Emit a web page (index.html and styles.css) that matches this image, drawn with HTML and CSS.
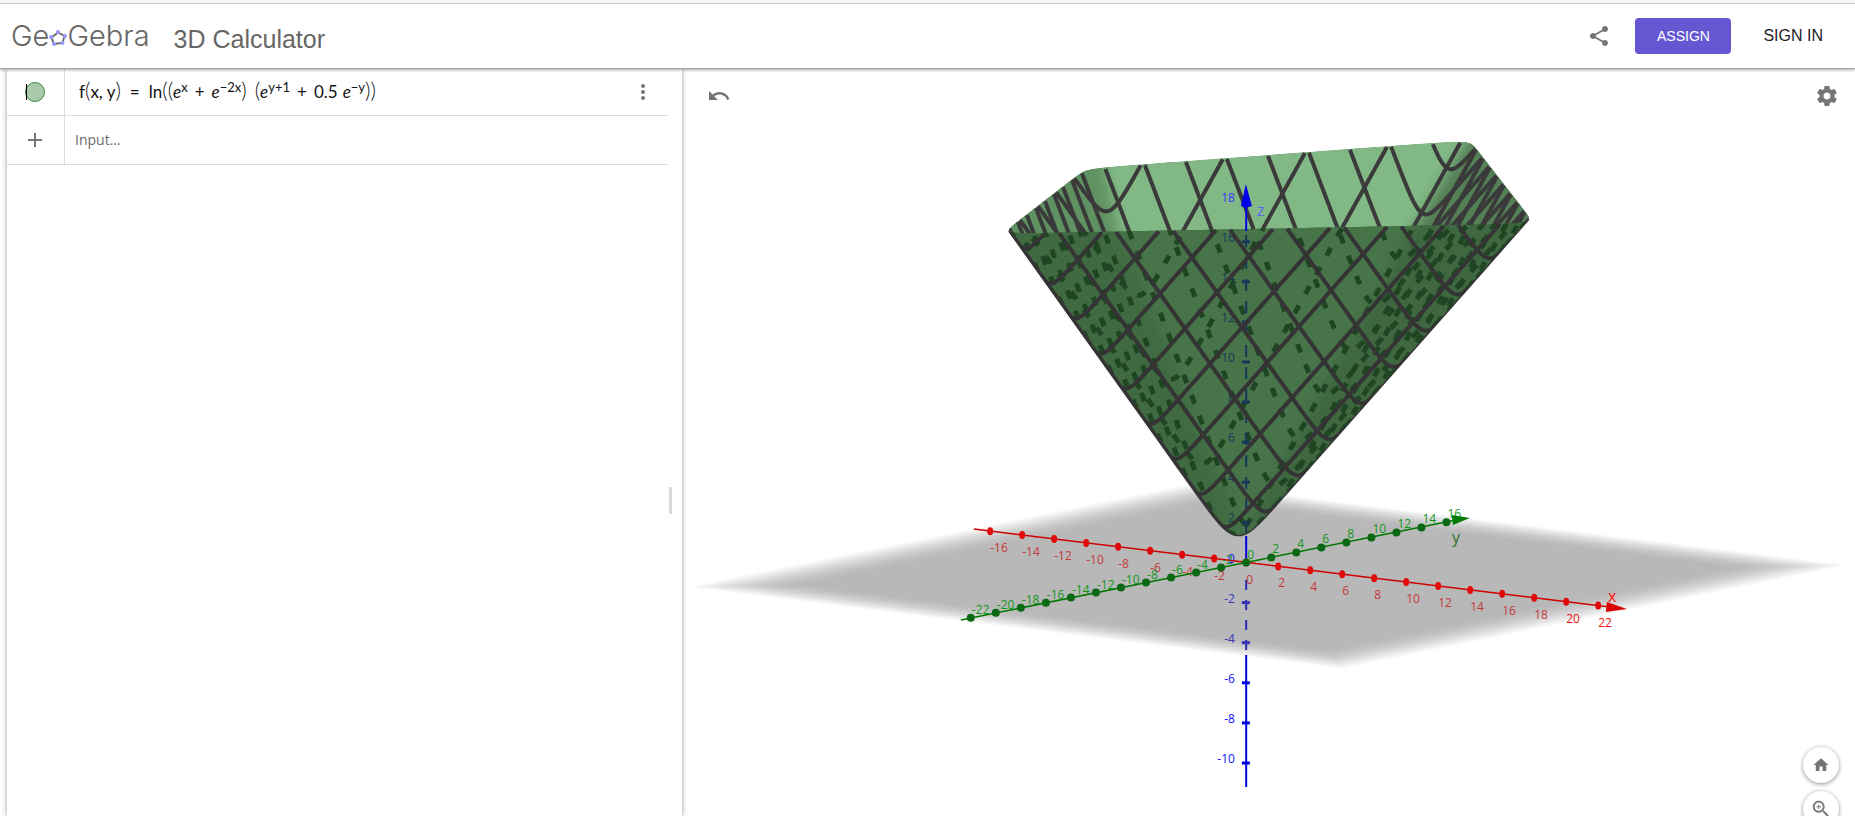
FILE: index.html
```html
<!DOCTYPE html>
<html lang="en">
<head>
<meta charset="utf-8">
<title>3D Calculator - GeoGebra</title>
<link rel="stylesheet" href="styles.css">
</head>
<body>
<header class="header">
  <a class="logo" href="#" aria-label="GeoGebra">
    <span>Ge</span>
    <svg class="logo-o" viewBox="0 0 18 18" aria-hidden="true">
      <path d="M9 3.500 15.500 7 13.500 14 5 15 2.500 8.500Z" fill="none" stroke="#666" stroke-width="1.800"/>
      <g fill="#9999ff"><circle cx="9" cy="3" r="2"/><circle cx="16" cy="7" r="2"/><circle cx="13.500" cy="14" r="2"/><circle cx="5" cy="15" r="2"/><circle cx="2" cy="8" r="2"/></g>
    </svg>
    <span>Gebra</span>
  </a>
  <h1 class="title">3D Calculator</h1>
  <div class="actions">
    <button class="icon-button" aria-label="Share">
      <svg viewBox="0 0 24 24"><path d="M18 16.080c-.76 0-1.440.3-1.960.77L8.910 12.700c.05-.23.09-.46.09-.7s-.04-.47-.09-.7l7.050-4.110c.54.5 1.250.81 2.040.81 1.660 0 3-1.340 3-3s-1.340-3-3-3-3 1.340-3 3c0 .24.04.47.09.7L8.040 9.810C7.500 9.310 6.790 9 6 9c-1.660 0-3 1.340-3 3s1.340 3 3 3c.79 0 1.500-.31 2.040-.81l7.120 4.160c-.05.21-.08.43-.08.65 0 1.610 1.310 2.920 2.920 2.920s2.920-1.310 2.920-2.920-1.310-2.920-2.920-2.920z"/></svg>
    </button>
    <button class="assign">ASSIGN</button>
    <button class="sign-in">SIGN IN</button>
  </div>
</header>
<main class="workspace">
  <section class="algebra" aria-label="Algebra view">
    <div class="row">
      <div class="row-head"><button class="marble" aria-label="Show or hide f"></button></div>
      <div class="formula">
        <span>f<span class="tall">(</span>x, y<span class="tall">)</span></span><span class="wide">=</span><span>ln<span class="tall">((</span><i>e</i><sup>x</sup></span><span class="op">+</span><span><i>e</i><sup>−2x</sup><span class="tall">)</span></span><span class="group"><span class="tall">(</span><i>e</i><sup>y+1</sup></span><span class="op">+</span><span>0.5</span><span class="factor"><i>e</i><sup>−y</sup><span class="tall">))</span></span>
      </div>
      <button class="icon-button more" aria-label="More">
        <svg viewBox="0 0 24 24"><circle cx="12" cy="6" r="2"/><circle cx="12" cy="12" r="2"/><circle cx="12" cy="18" r="2"/></svg>
      </button>
    </div>
    <div class="row">
      <div class="row-head">
        <button class="icon-button" aria-label="Add"><svg viewBox="0 0 24 24"><path d="M11 5h2v6h6v2h-6v6h-2v-6H5v-2h6z"/></svg></button>
      </div>
      <input class="entry" type="text" placeholder="Input..." aria-label="Input">
    </div>
    <div class="handle"></div>
  </section>
  <section class="graphics" aria-label="3D graphics view">
    <svg id="scene" class="scene" viewBox="682 69 1173 747" preserveAspectRatio="xMidYMid slice"></svg>
    <div class="toolbar">
      <button class="icon-button" aria-label="Undo"><svg viewBox="0 0 24 24"><path d="M12.500 8c-2.650 0-5.050.99-6.900 2.600L2 7v9h9l-3.620-3.620c1.390-1.160 3.160-1.880 5.120-1.880 3.540 0 6.550 2.310 7.600 5.500l2.370-.78C21.080 11.030 17.150 8 12.500 8z"/></svg></button>
      <button class="icon-button" aria-label="Settings"><svg viewBox="0 0 24 24"><path d="M19.430 12.980c.04-.32.07-.64.07-.98s-.03-.66-.07-.98l2.110-1.650c.19-.15.24-.42.12-.64l-2-3.460c-.12-.22-.39-.3-.61-.22l-2.490 1c-.52-.4-1.080-.73-1.690-.98l-.38-2.650C14.460 2.180 14.250 2 14 2h-4c-.25 0-.46.18-.49.42l-.38 2.650c-.61.25-1.170.59-1.690.98l-2.490-1c-.23-.09-.49 0-.61.22l-2 3.460c-.13.22-.07.49.12.64l2.110 1.650c-.04.32-.07.65-.07.98s.03.66.07.98l-2.110 1.650c-.19.15-.24.42-.12.64l2 3.460c.12.22.39.3.61.22l2.490-1c.52.4 1.080.73 1.690.98l.38 2.650c.03.24.24.42.49.42h4c.25 0 .46-.18.49-.42l.38-2.650c.61-.25 1.170-.59 1.690-.98l2.490 1c.23.09.49 0 .61-.22l2-3.460c.12-.22.07-.49-.12-.64l-2.110-1.650zM12 15.500c-1.930 0-3.500-1.570-3.500-3.500s1.570-3.500 3.500-3.500 3.500 1.570 3.500 3.500-1.570 3.500-3.500 3.500z"/></svg></button>
    </div>
    <div class="zoom-panel">
      <button class="round" aria-label="Standard view"><svg viewBox="0 0 24 24"><path d="M10 20v-6h4v6h5v-8h3L12 3 2 12h3v8z"/></svg></button>
      <button class="round" aria-label="Zoom in"><svg viewBox="0 0 24 24"><path d="M15.500 14h-.79l-.28-.27C15.410 12.590 16 11.110 16 9.500 16 5.910 13.090 3 9.500 3S3 5.910 3 9.500 5.910 16 9.500 16c1.610 0 3.090-.59 4.230-1.570l.27.28v.79l5 4.990L20.490 19l-4.990-5zm-6 0C7.010 14 5 11.990 5 9.500S7.010 5 9.500 5 14 7.010 14 9.500 11.990 14 9.500 14zm2.500-4h-2v2H9v-2H7V9h2V7h1v2h2v1z"/></svg></button>
    </div>
  </section>
</main>
<script src="scene.js"></script>
</body>
</html>
```

FILE: styles.css
```css
* { box-sizing: border-box; }
body {
  margin: 0;
  height: 100vh;
  display: flex;
  flex-direction: column;
  overflow: hidden;
  background: #fff;
  font-family: "Liberation Sans", Arial, sans-serif;
}
button { border: 0; padding: 0; background: none; font-family: inherit; cursor: pointer; }
.header {
  position: relative;
  z-index: 2;
  flex: none;
  display: flex;
  align-items: center;
  height: 69px;
  padding: 4px 32px 4px 11px;
  border-top: 3px solid #f6f6fa;
  background: #fff;
  box-shadow: inset 0 1px #c9c9cf, inset 0 -1px #a8a8a8, 0 1px 3px rgba(0, 0, 0, .35);
}
.logo {
  display: flex;
  align-items: center;
  color: #666;
  font-family: Inter, sans-serif;
  font-weight: 300;
  font-size: 29px;
  line-height: 32px;
  text-decoration: none;
}
.logo-o { width: 18px; height: 18px; margin-top: 4px; }
.title { margin: 5px 0 0 24px; color: #666; font-size: 25px; font-weight: 400; line-height: 32px; }
.actions { display: flex; align-items: center; margin-left: auto; }
.icon-button { display: flex; width: 24px; height: 24px; }
.icon-button svg, .round svg { width: 100%; height: 100%; fill: #757575; }
.assign {
  width: 96px;
  height: 36px;
  margin: 0 32px 0 24px;
  border-radius: 4px;
  background: #6557d2;
  color: #fff;
  font-size: 14px;
}
.sign-in { color: #1c1c1f; font-size: 16px; }
.workspace { flex: 1; min-height: 0; display: flex; }
.algebra {
  position: relative;
  z-index: 1;
  flex: none;
  width: 36.4%;
  margin-left: 7px;
  padding-right: 15px;
  background: #fff;
  box-shadow: 0 0 5px rgba(0, 0, 0, .4);
}
.row { display: flex; align-items: center; height: 49px; border-bottom: 1px solid #dcdcdc; }
.row:first-child { height: 47px; }
.row-head {
  display: flex;
  align-items: center;
  justify-content: center;
  align-self: stretch;
  width: 58px;
  padding-right: 2px;
  border-right: 1px solid #dcdcdc;
}
.marble {
  position: relative;
  width: 20px;
  height: 20px;
  border: 1px solid #388c3c;
  border-radius: 50%;
  background: #a9cbab;
}
.marble::before { content: ""; position: absolute; left: 0; top: 1px; width: 1px; height: 16px; background: #000; }
.formula {
  display: flex;
  align-items: baseline;
  padding-left: 14px;
  color: #111;
  font-family: Lato, sans-serif;
  font-size: 17px;
  line-height: 32px;
  white-space: nowrap;
}
.formula sup { font-size: 13px; line-height: 1; vertical-align: 6px; }
.formula .tall { font-size: 21px; font-weight: 300; line-height: 1; }
.wide { margin: 0 9px; }
.op { margin: 0 7px; }
.group { margin-left: 8px; }
.factor { margin-left: 5px; }
.more { margin: 0 12px 0 auto; }
.entry {
  flex: 1;
  min-width: 0;
  padding: 0 0 2px 10px;
  border: 0;
  outline: 0;
  background: none;
  color: #222;
  font-family: "Open Sans", sans-serif;
  font-size: 14px;
}
.entry::placeholder { color: #6c6c6c; opacity: 1; }
.handle {
  position: absolute;
  right: 10px;
  top: 56%;
  width: 3px;
  height: 27px;
  background: #dadada;
}
.graphics { position: relative; flex: 1; min-width: 0; overflow: hidden; }
.scene { display: block; width: 100%; height: 100%; }
.scene text { font-family: "Open Sans", sans-serif; font-size: 12px; }
.scene .axis-name { font-size: 16px; }
.toolbar {
  position: absolute;
  inset: 15px 16px auto 25px;
  display: flex;
  justify-content: space-between;
}
.zoom-panel {
  position: absolute;
  right: 16px;
  bottom: -11px;
  display: flex;
  flex-direction: column;
  gap: 8px;
}
.round {
  width: 36px;
  height: 36px;
  padding: 9px;
  border-radius: 50%;
  background: #fff;
  box-shadow: 0 1px 4px rgba(0, 0, 0, .45);
}
.round:last-child { padding: 7px; }
```

FILE: scene.js
```js
// Draws z = ln((e^x + e^-2x)(e^(y+1) + 0.5 e^-y)) in parallel projection.
const svg = document.getElementById("scene");
const NS = "http://www.w3.org/2000/svg";
const TOP = 18.84;
const CX = 0.231, CY = -0.847;

const f = (x, y) => Math.log(Math.exp(x) + Math.exp(-2 * x)) + Math.log(Math.exp(y + 1) + 0.5 * Math.exp(-y));
const project = (x, y, z) => [1246.3 + 16 * x + 12.52 * y, 562.5 + 1.958 * x - 2.508 * y - 20.05 * z];

function el(name, attrs, parent = svg, text) {
  const node = document.createElementNS(NS, name);
  for (const k in attrs) node.setAttribute(k, attrs[k]);
  if (text !== undefined) node.textContent = text;
  parent.appendChild(node);
  return node;
}
const pts = list => list.map(p => p[0].toFixed(1) + "," + p[1].toFixed(1)).join(" ");

// Level curve of the surface at height h.
function level(h, n = 240) {
  const out = [];
  for (let i = 0; i < n; i++) {
    const a = (i / n) * 2 * Math.PI, c = Math.cos(a), s = Math.sin(a);
    let lo = 0, hi = 40;
    for (let k = 0; k < 40; k++) {
      const m = (lo + hi) / 2;
      if (f(CX + m * c, CY + m * s) < h) lo = m; else hi = m;
    }
    out.push(project(CX + lo * c, CY + lo * s, h));
  }
  return out;
}

function hull(points) {
  points.sort((a, b) => a[0] - b[0] || a[1] - b[1]);
  const half = list => {
    const h = [];
    for (const p of list) {
      while (h.length > 1) {
        const a = h[h.length - 2], b = h[h.length - 1];
        if ((b[0] - a[0]) * (p[1] - a[1]) - (b[1] - a[1]) * (p[0] - a[0]) <= 0) h.pop(); else break;
      }
      h.push(p);
    }
    return h;
  };
  const upper = half(points), lower = half([...points].reverse());
  return { all: upper.slice(0, -1).concat(lower.slice(0, -1)), lower };
}

// Mesh curves split into parts seen from outside and parts seen from inside.
function mesh() {
  const outside = [], inside = [];
  const trace = at => {
    let run = [], side = null;
    const flush = () => { if (run.length > 1) (side ? inside : outside).push(run); };
    for (let t = -22; t <= 22; t += 0.05) {
      const [x, y] = at(t), z = f(x, y);
      if (z > TOP) { flush(); run = []; side = null; continue; }
      const fx = (Math.exp(x) - 2 * Math.exp(-2 * x)) / (Math.exp(x) + Math.exp(-2 * x));
      const fy = (Math.exp(y + 1) - 0.5 * Math.exp(-y)) / (Math.exp(y + 1) + 0.5 * Math.exp(-y));
      const s = -12.52 * fx + 16 * fy + 3.22 > 0;
      const p = project(x, y, z);
      if (side !== null && s !== side) { run.push(p); flush(); run = []; }
      side = s;
      run.push(p);
    }
    flush();
  };
  for (let k = -20; k <= 20; k += 2) {
    trace(t => [k, t]);
    trace(t => [t, k]);
  }
  return { outside, inside };
}

const line = (x1, y1, x2, y2, stroke, width, parent = svg) =>
  el("line", { x1, y1, x2, y2, stroke, "stroke-width": width }, parent);

// Ground plane with a soft rim.
const corners = [[684, 587], [1192, 483], [1852, 565], [1343, 669]];
const mid = [1268, 576];
for (let i = 1; i <= 40; i++) {
  const t = i / 40, k = 1 - 0.23 * t;
  const c = Math.round(255 - 71 * Math.sin(t * Math.PI / 2));
  el("polygon", {
    points: pts(corners.map(p => [mid[0] + (p[0] - mid[0]) * k, mid[1] + (p[1] - mid[1]) * k])),
    fill: `rgb(${c},${c},${c})`
  });
}

// Surface.
const rim = level(TOP);
let cloud = [...rim];
for (let h = 1.5; h < TOP; h += h < 5 ? 0.04 : 0.5) cloud = cloud.concat(level(h));
const body = hull(cloud);
const defs = el("defs", {});
el("polygon", { points: pts(body.all) }, el("clipPath", { id: "body" }, defs));
el("polygon", { points: pts(rim) }, el("clipPath", { id: "opening" }, defs));
el("feGaussianBlur", { stdDeviation: 6 }, el("filter", { id: "soft", x: "-20%", y: "-20%", width: "140%", height: "140%" }, defs));

const { outside, inside } = mesh();
const polyline = (run, stroke, width, parent, extra = {}) =>
  el("polyline", { points: pts(run), fill: "none", stroke, "stroke-width": width, ...extra }, parent);

function facets(parent, left, right) {
  el("polygon", { points: "960,236 1099,140 1118,230 1236,520 1230,545", fill: "#123a18", opacity: left, filter: "url(#soft)" }, parent);
  el("polygon", { points: "1480,120 1560,219 1240,560 1262,500 1412,232", fill: "#123018", opacity: right, filter: "url(#soft)" }, parent);
}

const bodyGroup = el("g", { "clip-path": "url(#body)" });
el("polygon", { points: pts(body.all), fill: "#48744a" }, bodyGroup);
facets(bodyGroup, 0.14, 0.18);
inside.forEach(r => polyline(r, "#1f4523", 5, bodyGroup, { "stroke-dasharray": "9 13" }));

const innerAxis = "#15385a";
el("line", { x1: 1246.3, y1: 235, x2: 1246.3, y2: 534, stroke: innerAxis, "stroke-width": 2, "stroke-dasharray": "12 10" }, bodyGroup);
for (let z = 2; z <= 16; z += 2) {
  const y = 562.5 - 20.05 * z;
  line(1242, y, 1250, y, innerAxis, 3, bodyGroup);
  el("text", { x: 1235, y: y, "text-anchor": "end", fill: innerAxis }, bodyGroup, z);
}
outside.forEach(r => polyline(r, "#353435", 4, bodyGroup));
polyline(body.lower, "#353435", 1.5, svg);

const opening = el("g", { "clip-path": "url(#opening)" });
el("polygon", { points: pts(rim), fill: "#82b885" }, opening);
facets(opening, 0.3, 0.42);
inside.forEach(r => polyline(r, "#3b3a3b", 4, opening));

// Vertical axis.
line(1246.3, 205, 1246.3, 231, "#0000e0", 2);
el("polygon", { points: "1246,184 1241,206 1246,208 1252,206", fill: "#0000e8" });
el("text", { x: 1235, y: 202, "text-anchor": "end", fill: "#3737ff" }, svg, "18");
el("text", { x: 1257, y: 216, fill: "#5c68e8", class: "axis-name" }, svg, "z");
line(1246.3, 536, 1246.3, 562, "#0000e0", 2);
el("line", { x1: 1246.3, y1: 580, x2: 1246.3, y2: 650, stroke: "#2c2cb4", "stroke-width": 2, "stroke-dasharray": "10 10" });
line(1246.3, 655, 1246.3, 787, "#0000d8", 2);
for (let z = -10; z < 0; z += 2) {
  const y = 562.5 - 20.05 * z, c = z > -5 ? "#3434b4" : "#0000e0";
  line(1242, y, 1250, y, c, 3);
  el("text", { x: 1235, y: y, "text-anchor": "end", fill: z > -5 ? "#3838b8" : "#1010ff" }, svg, z);
}
el("text", { x: 1235, y: 563, "text-anchor": "end", fill: "#1a1aff" }, svg, "0");

// Horizontal axes.
line(974, 529, 1610, 607, "#d00000", 1.5);
for (let x = -16; x <= 22; x += 2) {
  const [px, py] = project(x, 0, 0);
  el("ellipse", { cx: px, cy: py, rx: 3, ry: 4, fill: "#e00808" });
  el("text", { x: px, y: py + 21, fill: x > 18 ? "#f01010" : "#c43838" }, svg, x);
}
el("polygon", { points: "1607,602 1627,609 1606,612", fill: "#d80000" });
el("text", { x: 1608, y: 602, fill: "#ff1010", class: "axis-name" }, svg, "x");

line(961, 620, 1456, 520, "#007800", 1.5);
for (let y = -22; y <= 16; y += 2) {
  const [px, py] = project(0, y, 0);
  el("circle", { cx: px, cy: py, r: 4, fill: "#0b6814" });
  el("text", { x: px + 1, y: py - 4, fill: "#12961a" }, svg, y);
}
el("polygon", { points: "1452,515 1470,518 1453,525", fill: "#007c00" });
el("text", { x: 1452, y: 543, fill: "#2a722a", class: "axis-name" }, svg, "y");
```
